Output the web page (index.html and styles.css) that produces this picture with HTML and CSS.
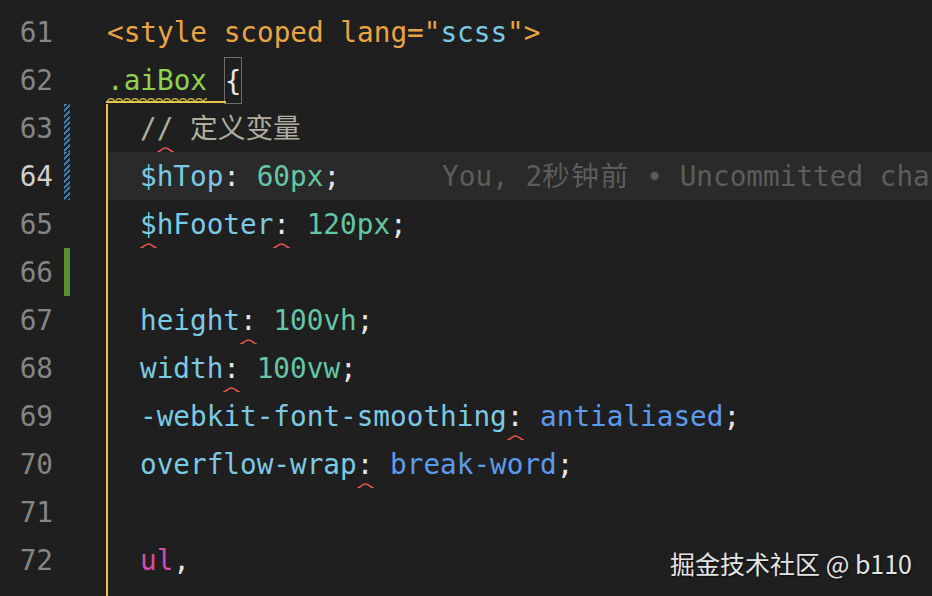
FILE: index.html
```html
<!DOCTYPE html>
<html lang="zh">
<head>
<meta charset="utf-8">
<title>aiBox.vue</title>
<link rel="stylesheet" href="styles.css">
</head>
<body>
<div class="editor">
  <div class="gutter">
    <div class="ln"><span class="num">61</span><span class="mark"></span></div>
    <div class="ln"><span class="num">62</span><span class="mark"></span></div>
    <div class="ln"><span class="num">63</span><span class="mark mod"></span></div>
    <div class="ln"><span class="num active">64</span><span class="mark mod"></span></div>
    <div class="ln"><span class="num">65</span><span class="mark"></span></div>
    <div class="ln"><span class="num">66</span><span class="mark add"></span></div>
    <div class="ln"><span class="num">67</span><span class="mark"></span></div>
    <div class="ln"><span class="num">68</span><span class="mark"></span></div>
    <div class="ln"><span class="num">69</span><span class="mark"></span></div>
    <div class="ln"><span class="num">70</span><span class="mark"></span></div>
    <div class="ln"><span class="num">71</span><span class="mark"></span></div>
    <div class="ln"><span class="num">72</span><span class="mark"></span></div>
    <div class="ln"><span class="num">73</span><span class="mark"></span></div>
  </div>
  <div class="code">
    <div class="line top"><span class="tag">&lt;style scoped lang="</span><span class="str">scss</span><span class="tag">"&gt;</span></div>
    <div class="line top brace-line"><span class="sel warn">.aiBox</span> <span class="brace">{</span></div>
    <div class="block">
      <div class="line"><span class="cmt">/<span class="err">/</span> 定义变量</span></div>
      <div class="line current"><span class="var">$hTop</span><span class="pun">: </span><span class="nm">60px</span><span class="pun">;</span><span class="blame">      You, 2<span class="cjk">秒钟前</span> • Uncommitted changes</span></div>
      <div class="line"><span class="var"><span class="err">$</span>hFooter</span><span class="pun"><span class="err">:</span> </span><span class="nm">120px</span><span class="pun">;</span></div>
      <div class="line"></div>
      <div class="line"><span class="var">height</span><span class="pun"><span class="err">:</span> </span><span class="nm">100vh</span><span class="pun">;</span></div>
      <div class="line"><span class="var">width</span><span class="pun"><span class="err">:</span> </span><span class="nm">100vw</span><span class="pun">;</span></div>
      <div class="line"><span class="var">-webkit-font-smoothing</span><span class="pun"><span class="err">:</span> </span><span class="val">antialiased</span><span class="pun">;</span></div>
      <div class="line"><span class="var">overflow-wrap</span><span class="pun"><span class="err">:</span> </span><span class="val">break-word</span><span class="pun">;</span></div>
      <div class="line"></div>
      <div class="line"><span class="mag">ul</span><span class="pun">,</span></div>
      <div class="line"><span class="mag">ol</span><span class="pun"> {</span></div>
    </div>
  </div>
</div>
<div class="watermark">掘金技术社区 @ b110</div>
</body>
</html>
```

FILE: styles.css
```css
html, body {
  margin: 0;
  padding: 0;
  background: #1f1f1f;
  overflow: hidden;
  height: 596px;
}

.editor {
  display: flex;
  padding-top: 8px;
  font-family: "DejaVu Sans Mono", "Noto Sans CJK SC", monospace;
  font-size: 27.7px;
  line-height: 48px;
}

.gutter {
  width: 106px;
  flex: none;
}

.ln {
  height: 48px;
  display: flex;
}

.num {
  width: 53px;
  text-align: right;
  color: #858585;
  padding-top: 1px;
}

.num.active {
  color: #cfcfcf;
}

.mark {
  width: 6px;
  margin-left: 11px;
}

.mark.mod {
  background: repeating-linear-gradient(-45deg, #3b7ba8 0 2px, transparent 2px 4px);
}

.mark.add {
  background: #5c8d2b;
}

.code {
  flex: 1;
  min-width: 0;
  overflow: hidden;
}

.line {
  height: 48px;
  box-sizing: border-box;
  padding-left: 32px;
  padding-top: 1px;
  color: #e0e0e0;
  white-space: pre;
  overflow: hidden;
}

.line.top {
  padding-left: 1px;
  overflow: visible;
}

.line.brace-line {
  padding-top: 0;
}

.line.current {
  background: #2a2a2a;
}

.block {
  position: relative;
  border-left: 2px solid #e6c547;
}

.block::before {
  content: "";
  position: absolute;
  left: -2px;
  top: -3px;
  width: 120px;
  height: 2px;
  background: #e6c547;
}

.tag { color: #e9a544; }
.str { color: #79c8e3; }
.sel { color: #90d14e; }
.var { color: #7cc9e4; }
.pun { color: #e6e6e6; }
.nm { color: #63c7a5; }
.val { color: #5c9bec; }
.mag { color: #d64aa8; }
.cmt { color: #b0ac9f; }
.blame { color: #5c5c5c; margin-left: 2px; }
.cjk { letter-spacing: 1.5px; }

.brace {
  display: inline-block;
  height: 47px;
  box-sizing: border-box;
  line-height: 46px;
  padding-top: 1px;
  border: 1px solid #6f6f6f;
  vertical-align: top;
  margin-top: 1px;
  color: #e6e6e6;
}

.warn {
  position: relative;
  display: inline-block;
  padding-top: 1px;
}

.warn::after {
  content: "";
  position: absolute;
  left: 0;
  right: 0;
  bottom: 2px;
  height: 5px;
  background: url("data:image/svg+xml;utf8,<svg xmlns='http://www.w3.org/2000/svg' width='8' height='5'><path d='M0 4 Q2 0 4 1 Q6 0 8 4' fill='none' stroke='%23c9a93c' stroke-width='1.4'/></svg>") repeat-x;
}

.err {
  position: relative;
  display: inline-block;
}

.err::after {
  content: "";
  position: absolute;
  left: 0;
  width: 17px;
  bottom: 0;
  height: 6px;
  background: url("data:image/svg+xml;utf8,<svg xmlns='http://www.w3.org/2000/svg' width='17' height='6'><path d='M0 5.2 C3 5.2 5 1 8.5 1 C12 1 14 5.2 17 5.2' fill='none' stroke='%23e0554c' stroke-width='1.6'/></svg>") no-repeat;
}

.watermark {
  position: absolute;
  right: 20px;
  bottom: 17px;
  font-family: "Noto Sans CJK SC", "Noto Sans", sans-serif;
  font-size: 25px;
  line-height: 32px;
  color: #e4e4e4;
  text-shadow: 1px 1px 2px rgba(0, 0, 0, 0.7);
}
```
